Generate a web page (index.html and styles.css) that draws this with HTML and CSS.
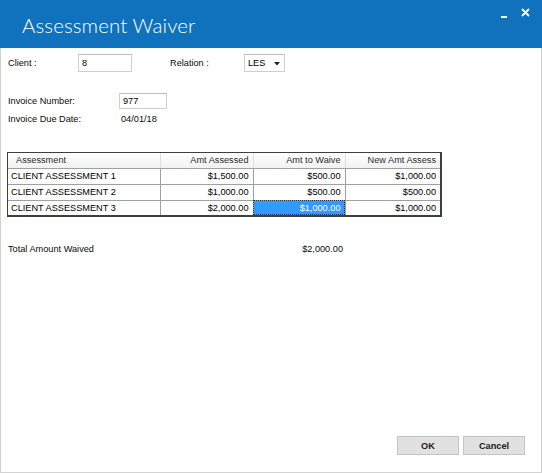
FILE: index.html
```html
<!DOCTYPE html>
<html lang="en">
<head>
<meta charset="utf-8">
<title>Assessment Waiver</title>
<link rel="stylesheet" href="styles.css">
</head>
<body>
<div class="window">
  <header class="titlebar">
    <h1 class="title">Assessment Waiver</h1>
    <div class="controls">
      <svg class="ctl" width="10" height="10" viewBox="0 0 10 10" aria-label="Minimize"><rect x="0" y="7" width="6" height="2" fill="#fff"/></svg>
      <svg class="ctl" width="10" height="10" viewBox="0 0 10 10" aria-label="Close"><path d="M1 1 L8 8 M8 1 L1 8" stroke="#fff" stroke-width="1.8" fill="none"/></svg>
    </div>
  </header>
  <main class="content">
    <div class="row-client">
      <span class="lbl lbl-client">Client :</span>
      <span class="field field-client">8</span>
      <span class="lbl lbl-relation">Relation :</span>
      <span class="field field-select">LES<svg class="caret" width="6" height="4" viewBox="0 0 6 4"><path d="M0 0 H6 L3 3.5 Z" fill="#222"/></svg></span>
    </div>
    <div class="row-invoice">
      <span class="lbl lbl-wide">Invoice Number:</span>
      <span class="field field-invoice">977</span>
    </div>
    <div class="row-due">
      <span class="lbl lbl-wide">Invoice Due Date:</span>
      <span class="value">04/01/18</span>
    </div>
    <div class="grid">
      <table>
        <colgroup>
          <col class="c1"><col class="c2"><col class="c3"><col class="c4">
        </colgroup>
        <thead>
          <tr><th class="left hd-first">Assessment</th><th>Amt Assessed</th><th>Amt to Waive</th><th>New Amt Assess</th></tr>
        </thead>
        <tbody>
          <tr><td class="left">CLIENT ASSESSMENT 1</td><td>$1,500.00</td><td>$500.00</td><td>$1,000.00</td></tr>
          <tr><td class="left">CLIENT ASSESSMENT 2</td><td>$1,000.00</td><td>$500.00</td><td>$500.00</td></tr>
          <tr class="last"><td class="left">CLIENT ASSESSMENT 3</td><td>$2,000.00</td><td class="selected">$1,000.00</td><td>$1,000.00</td></tr>
        </tbody>
      </table>
    </div>
    <div class="row-total">
      <span class="lbl">Total Amount Waived</span>
      <span class="total">$2,000.00</span>
    </div>
    <div class="buttons">
      <button class="btn">OK</button>
      <button class="btn">Cancel</button>
    </div>
  </main>
</div>
</body>
</html>
```
FILE: styles.css
```css
* { box-sizing: border-box; }
html, body { margin: 0; padding: 0; background: #fff; }
body {
  font-family: "Liberation Sans", Arial, sans-serif;
  font-size: 9.2px;
  color: #0a0a0a;
}
.window {
  width: 542px;
  height: 473px;
  display: flex;
  flex-direction: column;
}
.titlebar {
  height: 48px;
  background: #1071bd;
  display: flex;
  justify-content: space-between;
  align-items: flex-start;
  flex: none;
}
.title {
  margin: 0;
  padding: 13px 0 0 22px;
  font-family: Lato, "Liberation Sans", sans-serif;
  font-weight: 300;
  font-size: 20.5px;
  line-height: 24px;
  color: #fff;
  letter-spacing: 0.1px;
}
.controls {
  display: flex;
  gap: 10px;
  padding: 8px 11px 0 0;
}
.ctl { display: block; }
.ctl:first-child { margin-top: 1px; }
.content {
  flex: 1;
  display: flex;
  flex-direction: column;
  border: 1px solid #d2d2d2;
  border-top: none;
  padding: 6px 0 17px 7px;
}
.lbl { display: inline-block; }
.field {
  display: inline-flex;
  align-items: center;
  height: 18px;
  border: 1px solid #cfcfcf;
  border-top-color: #bdbdbd;
  background: #fff;
  padding: 0 3px;
  color: #000;
}
.row-client {
  display: flex;
  align-items: center;
  height: 18px;
}
.lbl-client { width: 70px; }
.field-client { width: 54px; }
.lbl-relation { width: 74px; margin-left: 38px; }
.field-select { width: 41px; justify-content: space-between; padding: 0 4px 0 3px; }
.caret { display: block; margin-top: 1px; }
.row-invoice {
  display: flex;
  align-items: center;
  margin-top: 21px;
  height: 16px;
}
.lbl-wide { width: 111px; }
.field-invoice { width: 48px; height: 16px; }
.row-due {
  display: flex;
  align-items: center;
  height: 16px;
  margin-top: 2px;
}
.value { padding-left: 2px; }
.grid {
  margin-top: 25px;
  margin-left: -1px;
  width: 435px;
  border: 1px solid #3f3f3f;
  border-right-width: 2px;
  border-bottom-width: 2px;
}
table {
  width: 432px;
  border-collapse: collapse;
  table-layout: fixed;
}
.c1 { width: 152px; }
.c2 { width: 93px; }
.c3 { width: 92px; }
.c4 { width: 95px; }
th, td {
  height: 16px;
  padding: 0 4px 0 3px;
  text-align: right;
  white-space: nowrap;
  overflow: hidden;
  font-weight: normal;
  line-height: 14px;
}
th {
  height: 15px;
  background: linear-gradient(#ffffff, #f1f1f1);
  color: #2a2a2a;
  border-right: 1px solid #dedede;
  border-bottom: 1px solid #a0a0a0;
}
th:last-child { border-right: none; }
th.hd-first { padding-left: 8px; }
td {
  border-right: 1px solid #a0a0a0;
  border-bottom: 1px solid #a0a0a0;
  color: #000;
}
td:last-child { border-right: none; }
tr.last td { border-bottom: none; height: 15px; }
.left { text-align: left; }
td.selected {
  background: #3399ff;
  color: #fff;
  outline: 1px dotted #1b3350;
  outline-offset: -1px;
}
.row-total {
  display: flex;
  align-items: center;
  height: 14px;
  margin-top: 25px;
}
.row-total .lbl { width: 287px; }
.total { width: 48px; text-align: right; }
.buttons {
  margin-top: auto;
  display: flex;
  justify-content: flex-end;
  gap: 4px;
  padding-right: 16px;
}
.btn {
  width: 62px;
  height: 19px;
  background: #e1e1e1;
  border: 1px solid #c4c4c4;
  font-family: "Liberation Sans", Arial, sans-serif;
  font-size: 9.2px;
  font-weight: bold;
  color: #1a1a1a;
  padding: 0;
}
```
